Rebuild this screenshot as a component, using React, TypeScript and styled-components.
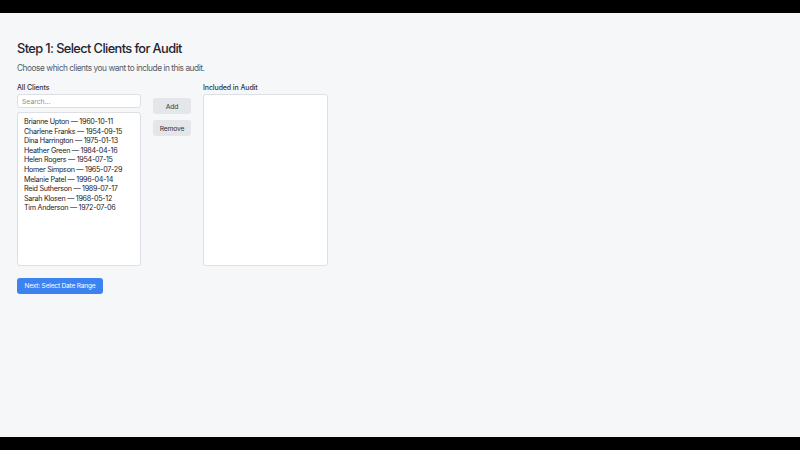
import React, { useState } from "react";
import styled, { createGlobalStyle } from "styled-components";

const GlobalStyle = createGlobalStyle`
  html, body { margin: 0; padding: 0; background: #000; }
  body { font-family: Inter, "Noto Sans", Arial, sans-serif; }
  * { box-sizing: border-box; }
`;

const Frame = styled.div`
  width: 800px;
  height: 450px;
  background: #000;
  padding: 13px 0;
`;

const Page = styled.main`
  height: 424px;
  background: #f6f7f9;
  padding: 27px 17px 0;
  display: flex;
  flex-direction: column;
`;

const Title = styled.h1`
  margin: 0;
  font-size: 12.8px;
  letter-spacing: -0.6px;
  line-height: 18px;
  font-weight: 500;
  color: #1f2430;
`;

const Subtitle = styled.p`
  margin: 4px 0 0;
  font-size: 8.3px;
  letter-spacing: -0.45px;
  line-height: 12px;
  color: #555b66;
`;

const Columns = styled.div`
  display: flex;
  align-items: flex-start;
  gap: 12px;
  margin-top: 9px;
`;

const Column = styled.section<{ $w: number }>`
  width: ${(p) => p.$w}px;
  display: flex;
  flex-direction: column;
`;

const Label = styled.div`
  font-size: 7px;
  letter-spacing: -0.1px;
  line-height: 10px;
  font-weight: 500;
  color: #30343c;
  margin-bottom: 1px;
`;

const Search = styled.input`
  height: 14px;
  width: 100%;
  border: 1px solid #dcdfe4;
  border-radius: 3px;
  background: #fff;
  font-family: inherit;
  font-size: 6.8px;
  padding: 0 4px;
  color: #222;
  outline: none;
  &::placeholder { color: #8a8f98; }
`;

const ListBox = styled.div<{ $tall?: boolean }>`
  margin-top: ${(p) => (p.$tall ? "0" : "4px")};
  height: ${(p) => (p.$tall ? "172px" : "154px")};
  background: #fff;
  border: 1px solid #dcdfe4;
  border-radius: 3px;
  padding: 4px 6px;
`;

const Item = styled.div`
  font-size: 7.2px;
  letter-spacing: -0.28px;
  line-height: 9.6px;
  color: #1d2129;
  white-space: nowrap;
`;

const ButtonStack = styled.div`
  display: flex;
  flex-direction: column;
  gap: 6px;
  padding-top: 15px;
`;

const GrayButton = styled.button`
  width: 38px;
  height: 16px;
  border: none;
  border-radius: 3px;
  background: #e4e6ea;
  color: #30343c;
  font-family: inherit;
  font-size: 6.8px;
  letter-spacing: -0.2px;
  padding: 0;
`;

const PrimaryButton = styled.button`
  align-self: flex-start;
  margin-top: 12px;
  width: 86px;
  height: 16px;
  border: none;
  border-radius: 3px;
  background: #3c82f0;
  color: #fff;
  font-family: inherit;
  font-size: 6.6px;
  letter-spacing: -0.2px;
  padding: 0;
`;

const clients = [
  "Brianne Upton — 1960-10-11",
  "Charlene Franks — 1954-09-15",
  "Dina Harrington — 1975-01-13",
  "Heather Green — 1984-04-16",
  "Helen Rogers — 1954-07-15",
  "Homer Simpson — 1965-07-29",
  "Melanie Patel — 1996-04-14",
  "Reid Sutherson — 1989-07-17",
  "Sarah Klosen — 1968-05-12",
  "Tim Anderson — 1972-07-06",
];

export default function App() {
  const [q, setQ] = useState("");
  return (
    <Frame>
      <GlobalStyle />
      <Page>
        <Title>Step 1: Select Clients for Audit</Title>
        <Subtitle>Choose which clients you want to include in this audit.</Subtitle>
        <Columns>
          <Column $w={124}>
            <Label>All Clients</Label>
            <Search placeholder="Search..." value={q} onChange={(e) => setQ(e.target.value)} />
            <ListBox>
              {clients.map((c) => (
                <Item key={c}>{c}</Item>
              ))}
            </ListBox>
          </Column>
          <ButtonStack>
            <GrayButton>Add</GrayButton>
            <GrayButton>Remove</GrayButton>
          </ButtonStack>
          <Column $w={125}>
            <Label>Included in Audit</Label>
            <ListBox $tall />
          </Column>
        </Columns>
        <PrimaryButton>Next: Select Date Range</PrimaryButton>
      </Page>
    </Frame>
  );
}
